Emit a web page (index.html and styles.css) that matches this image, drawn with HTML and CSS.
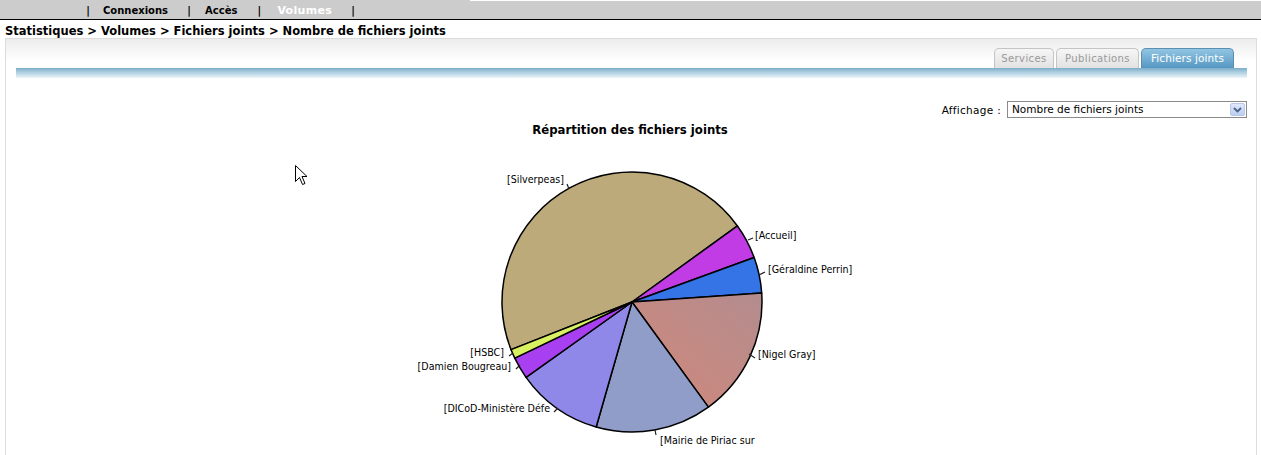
FILE: index.html
```html
<!DOCTYPE html>
<html lang="fr">
<head>
<meta charset="utf-8">
<title>Statistiques - Volumes</title>
<link rel="stylesheet" href="styles.css">
</head>
<body>
<div class="topnav">
  <div class="nav-main">
    <span class="sep">|</span>
    <span class="nav-item nav-connexions">Connexions</span>
    <span class="sep">|</span>
    <span class="nav-item nav-acces">Accès</span>
    <span class="sep">|</span>
    <span class="nav-item current">Volumes</span>
    <span class="sep">|</span>
  </div>
  <div class="nav-fill"></div>
</div>
<div class="breadcrumb">Statistiques &gt; Volumes &gt; Fichiers joints &gt; Nombre de fichiers joints</div>
<div class="panel">
  <div class="tabs">
    <span class="tab tab-services">Services</span>
    <span class="tab tab-publications">Publications</span>
    <span class="tab tab-fichiers active">Fichiers joints</span>
  </div>
  <div class="tabbar"></div>
  <div class="filter">
    <span class="filter-label">Affichage :</span>
    <div class="select">
      <span class="select-value">Nombre de fichiers joints</span>
      <span class="select-btn">
        <svg width="9" height="6" viewBox="0 0 9 6"><path d="M1 1 L4.5 4.5 L8 1" fill="none" stroke="#4d6185" stroke-width="1.8"/></svg>
      </span>
    </div>
  </div>
  <div class="chart">
    <svg class="pie" width="482" height="335" viewBox="0 0 482 335">
      <defs>
        <linearGradient id="nigel" x1="0" y1="1" x2="1" y2="0">
          <stop offset="0" stop-color="#d2887a"/>
          <stop offset="1" stop-color="#b38c8e"/>
        </linearGradient>
      </defs>
      <text class="chart-title" x="240" y="14" text-anchor="middle">Répartition des fichiers joints</text>
      <g class="slices">
        <path d="M242,182 L121.05,229.65 A130,130 0 0 1 347.44,105.95 Z" fill="#bcaa7a"/>
        <path d="M242,182 L347.44,105.95 A130,130 0 0 1 364.16,137.54 Z" fill="#c23ce6"/>
        <path d="M242,182 L364.16,137.54 A130,130 0 0 1 371.69,172.93 Z" fill="#3474e6"/>
        <path d="M242,182 L371.69,172.93 A130,130 0 0 1 318.41,287.17 Z" fill="url(#nigel)"/>
        <path d="M242,182 L318.41,287.17 A130,130 0 0 1 206.17,306.97 Z" fill="#8f9dc8"/>
        <path d="M242,182 L206.17,306.97 A130,130 0 0 1 136.04,257.31 Z" fill="#9088e8"/>
        <path d="M242,182 L136.04,257.31 A130,130 0 0 1 124.77,238.17 Z" fill="#a83ff0"/>
        <path d="M242,182 L124.77,238.17 A130,130 0 0 1 121.05,229.65 Z" fill="#d9f062"/>
      </g>
      <g class="leaders">
        <path d="M177,64 L179,69"/>
        <path d="M358,120 L363,118"/>
        <path d="M369,155 L375,152"/>
        <path d="M359,234 L365,238"/>
        <path d="M265,310 L266,315"/>
        <path d="M164,292 L168,288"/>
        <path d="M126,249 L130,245"/>
        <path d="M119,236 L123,233"/>
      </g>
      <g class="labels">
        <text x="117" y="63">[Silverpeas]</text>
        <text x="365" y="119">[Accueil]</text>
        <text x="378" y="153">[Géraldine Perrin]</text>
        <text x="368" y="238">[Nigel Gray]</text>
        <text x="270" y="324">[Mairie de Piriac sur</text>
        <text x="160" y="292" text-anchor="end">[DICoD-Ministère Défe</text>
        <text x="121" y="250" text-anchor="end">[Damien Bougreau]</text>
        <text x="114" y="236" text-anchor="end">[HSBC]</text>
      </g>
    </svg>
  </div>
</div>
<svg class="cursor" width="13" height="22" viewBox="0 0 13 22">
  <path d="M0.5,0.5 L0.5,16.5 L4.5,12.5 L7.5,19.5 L10,18.5 L7,11.5 L12,11.5 Z" fill="#fff" stroke="#000" stroke-width="1"/>
</svg>
</body>
</html>
```
FILE: styles.css
```css
html, body {
  margin: 0;
  padding: 0;
  background: #fff;
  overflow: hidden;
}
body {
  font-family: "DejaVu Sans", Verdana, sans-serif;
  color: #000;
  position: relative;
  height: 455px;
}
.topnav {
  display: flex;
  height: 19px;
  background: #cccccc;
  border-bottom: 1px solid #000;
}
.nav-main {
  width: 470px;
  display: flex;
  align-items: center;
  padding-left: 86px;
  box-sizing: border-box;
  font-size: 10px;
  font-weight: bold;
  padding-top: 2px;
}
.nav-fill {
  flex: 1;
  border-top: 1px solid #fff;
}
.sep {
  display: inline-block;
  width: 4px;
  text-align: center;
  font-weight: bold;
  color: #000;
}
.nav-item {
  color: #000;
}
.nav-connexions {
  margin: 0 19px 0 13px;
}
.nav-acces {
  margin: 0 20px 0 14px;
}
.nav-item.current {
  color: #fff;
  font-size: 11px;
  letter-spacing: 0.3px;
  margin: 0 19px 0 16px;
}
.breadcrumb {
  font-size: 11.5px;
  font-weight: bold;
  padding: 5px 0 0 5px;
  height: 13px;
  line-height: 13px;
}
.panel {
  margin: 0 4px 0 5px;
  border: 1px solid #dcdcdc;
  border-bottom: none;
  background: linear-gradient(#ececec, #ffffff 22px);
  height: 500px;
}
.tabs {
  display: flex;
  justify-content: flex-end;
  gap: 2px;
  padding: 9px 22px 0 0;
}
.tab {
  box-sizing: border-box;
  height: 20px;
  line-height: 19px;
  text-align: center;
  font-size: 10px;
  color: #9a9a9a;
  background: linear-gradient(#f6f6f6, #e2e2e2);
  border: 1px solid #c4c4c4;
  border-bottom: none;
  border-radius: 5px 5px 0 0;
  letter-spacing: 0.4px;
}
.tab-services {
  width: 60px;
}
.tab-publications {
  width: 83px;
}
.tab-fichiers {
  width: 93px;
}
.tab.active {
  color: #fff;
  font-size: 10.5px;
  letter-spacing: 0.1px;
  background: linear-gradient(#92c6e2, #5697c3);
  border-color: #5a8fb3;
}
.tabbar {
  margin: 0 9px 0 10px;
  height: 10px;
  background: linear-gradient(#7dadc8, #a9cde0 40%, #eef6fa);
}
.filter {
  display: flex;
  justify-content: flex-end;
  align-items: center;
  gap: 6px;
  padding-right: 9px;
  margin-top: 23px;
  font-size: 10.5px;
}
.filter-label {
  letter-spacing: 0.3px;
}
.select {
  width: 238px;
  height: 15px;
  border: 1px solid #8a8a8a;
  display: flex;
  align-items: center;
  justify-content: space-between;
  background: #fff;
}
.select-value {
  padding-left: 4px;
  line-height: 15px;
}
.select-btn {
  width: 15px;
  height: 13px;
  margin-right: 1px;
  display: flex;
  align-items: center;
  justify-content: center;
  background: linear-gradient(#dfe8fb, #bccdf3);
  border: 1px solid #b9c8ea;
  box-sizing: border-box;
  border-radius: 2px;
}
.chart {
  display: flex;
  justify-content: center;
  margin-top: 2px;
}
.pie {
  display: block;
}
.chart-title {
  font-family: "DejaVu Sans Condensed", "DejaVu Sans", sans-serif;
  font-weight: bold;
  font-size: 13px;
  fill: #000;
}
.slices path {
  stroke: #000;
  stroke-width: 1.5;
  stroke-linejoin: round;
}
.leaders path {
  stroke: #222;
  stroke-width: 1.2;
  fill: none;
}
.labels text {
  font-family: "DejaVu Sans Condensed", "DejaVu Sans", sans-serif;
  font-size: 10.6px;
  fill: #000;
}
.cursor {
  position: absolute;
  left: 295px;
  top: 165px;
}
```
